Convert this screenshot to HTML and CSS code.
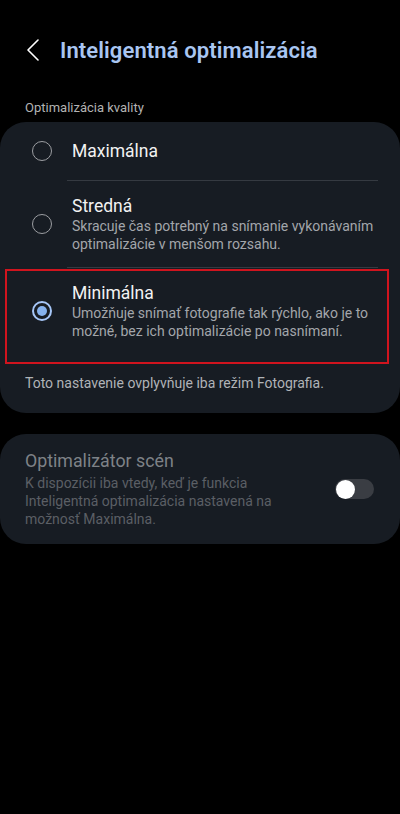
FILE: index.html
```html
<!DOCTYPE html>
<html lang="sk">
<head>
<meta charset="utf-8">
<title>Inteligentná optimalizácia</title>
<link rel="stylesheet" href="styles.css">
</head>
<body>
<header class="topbar">
  <span class="back">
    <svg width="14" height="22" viewBox="0 0 14 22"><path d="M12 1 L2 11 L12 21" fill="none" stroke="#ffffff" stroke-width="1.6" stroke-linecap="round" stroke-linejoin="round"/></svg>
  </span>
  <h1 class="title">Inteligentná optimalizácia</h1>
</header>

<div class="section-label">Optimalizácia kvality</div>

<section class="card">
  <div class="row row-single">
    <span class="radio"></span>
    <div class="row-text">
      <div class="row-title">Maximálna</div>
    </div>
  </div>
  <div class="divider"></div>
  <div class="row">
    <span class="radio"></span>
    <div class="row-text">
      <div class="row-title">Stredná</div>
      <div class="row-desc">Skracuje čas potrebný na snímanie vykonávaním optimalizácie v menšom rozsahu.</div>
    </div>
  </div>
  <div class="divider"></div>
  <div class="row row-selected">
    <span class="radio radio-on"></span>
    <div class="row-text">
      <div class="row-title">Minimálna</div>
      <div class="row-desc">Umožňuje snímať fotografie tak rýchlo, ako je to možné, bez ich optimalizácie po nasnímaní.</div>
    </div>
  </div>
  <div class="card-note">Toto nastavenie ovplyvňuje iba režim Fotografia.</div>
</section>

<section class="card card-scene">
  <div class="scene-text">
    <div class="scene-title">Optimalizátor scén</div>
    <div class="scene-desc">K dispozícii iba vtedy, keď je funkcia Inteligentná optimalizácia nastavená na možnosť Maximálna.</div>
  </div>
  <span class="switch"><span class="thumb"></span></span>
</section>
</body>
</html>
```

FILE: styles.css
```css
* { box-sizing: border-box; }
html, body { margin: 0; padding: 0; }
body {
  background: #000000;
  width: 400px;
  min-height: 814px;
  font-family: Roboto, "Noto Sans", sans-serif;
  color: #f2f2f2;
}
.topbar {
  display: flex;
  align-items: center;
  height: 40px;
  margin-top: 30px;
  padding-left: 26px;
}
.back {
  display: flex;
  width: 34px;
}
.title {
  margin: 0;
  font-size: 22px;
  font-weight: 600;
  color: #a9c6f2;
  letter-spacing: 0.1px;
}
.section-label {
  margin-top: 29px;
  padding-left: 25px;
  font-size: 13px;
  line-height: 18px;
  color: #b3b3b3;
}
.card {
  background: #171c23;
  border-radius: 26px;
  margin-top: 5px;
}
.row {
  display: flex;
  align-items: center;
  min-height: 86px;
  padding: 14px 20px 14px 32px;
}
.row-single { min-height: 58px; }
.radio {
  flex: none;
  width: 20px;
  height: 20px;
  border-radius: 50%;
  border: 1.5px solid #9c9ea2;
  margin-right: 20px;
}
.radio-on {
  border: 2px solid #a6c6f7;
  position: relative;
}
.radio-on::after {
  content: "";
  position: absolute;
  left: 3px;
  top: 3px;
  width: 10px;
  height: 10px;
  border-radius: 50%;
  background: #86b2ee;
}
.row-title {
  font-size: 17.5px;
  line-height: 22px;
  color: #f2f2f2;
}
.row-desc {
  margin-top: 0;
  font-size: 14px;
  line-height: 18px;
  color: #a3a6ab;
}
.divider {
  height: 1px;
  background: #353a41;
  margin: 0 22px 0 67px;
}
.row-selected { position: relative; }
.row-selected::after {
  content: "";
  position: absolute;
  left: 5px;
  right: 11px;
  top: 1px;
  bottom: -10px;
  border: 2px solid #d0141e;
}
.card-note {
  padding: 20px 25px 21px 25px;
  font-size: 14px;
  line-height: 18px;
  color: #b0b3b7;
}
.card-scene {
  margin-top: 21px;
  display: flex;
  align-items: center;
  padding: 16px 26px 16px 25px;
}
.scene-text { flex: 1; }
.scene-title {
  font-size: 17.8px;
  line-height: 22px;
  color: #7e8287;
}
.scene-desc {
  margin-top: 2px;
  width: 275px;
  font-size: 14px;
  line-height: 18px;
  color: #5b5f65;
}
.switch {
  flex: none;
  position: relative;
  width: 39px;
  height: 20px;
  border-radius: 10px;
  background: #3a3d43;
  margin-left: 12px;
}
.thumb {
  position: absolute;
  left: 1px;
  top: 1px;
  width: 19px;
  height: 19px;
  border-radius: 50%;
  background: #ffffff;
}
```
